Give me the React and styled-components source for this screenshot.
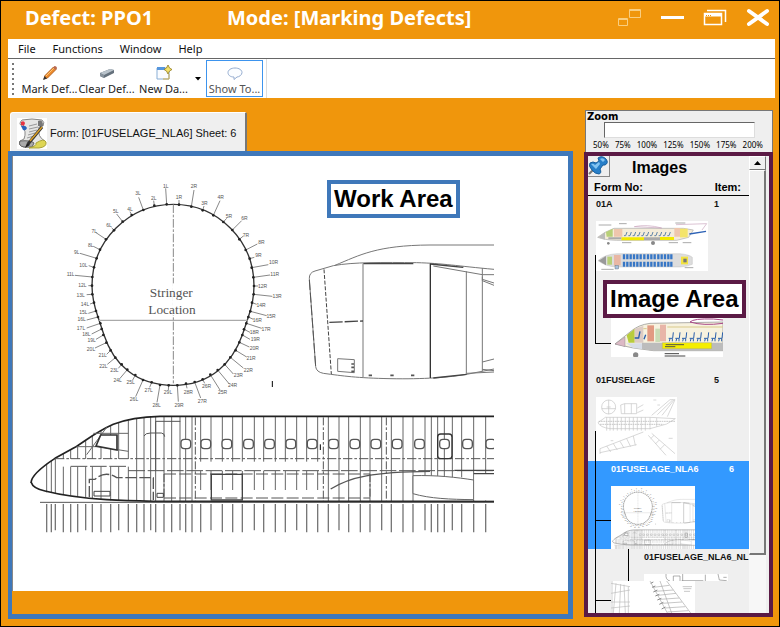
import React from "react";
import styled, { createGlobalStyle } from "styled-components";

const ORANGE = "#f0960c";
const BLUE = "#3f78ba";
const PLUM = "#5b1a45";
const PANEL = "#efefef";
const UI = '"Noto Sans", "Open Sans", sans-serif';
const ARIAL = '"Liberation Sans", Arial, sans-serif';

const GlobalStyle = createGlobalStyle`
  * { box-sizing: border-box; }
  body { margin: 0; background: ${ORANGE}; font-family: ${ARIAL}; }
  button { font: inherit; color: inherit; border: 0; padding: 0; background: none; cursor: pointer; }
  svg { display: block; flex: none; }
`;

const Window = styled.div`
  display: flex;
  flex-direction: column;
  height: 100vh;
  border: 1px solid #000;
  background: ${ORANGE};
`;

const TitleBar = styled.header`
  display: flex;
  align-items: center;
  height: 38px;
  padding: 0 9px 4px 24px;
  flex: none;
`;

const Title = styled.h1`
  margin: 0;
  width: ${(p) => p.$width || "auto"};
  font: 700 20px/30px ${UI};
  color: #fff;
  white-space: nowrap;
`;

const WindowControls = styled.div`
  display: flex;
  align-items: center;
  gap: 19px;
  margin-left: auto;
`;

const WindowButton = styled.button`
  width: 24px;
  height: 20px;
`;

const Chrome = styled.div`
  margin: 0 4px 0 7px;
  background: #fff;
  flex: none;
`;

const MenuBar = styled.nav`
  display: flex;
  gap: 17px;
  height: 20px;
  padding-left: 10px;
  border-bottom: 1px solid #666;
  font: 11px/18px ${UI};
  color: #111;
`;

const MenuButton = styled.button``;

const ToolBar = styled.div`
  display: flex;
  align-items: center;
  height: 39px;
  width: 259px;
  padding-left: 4px;
  border-right: 1px solid #ddd;
`;

const Grip = styled.span`
  width: 2px;
  height: 32px;
  margin-right: 7px;
  background: repeating-linear-gradient(#777 0 2px, #fff 2px 5px);
`;

const ToolButton = styled.button`
  display: flex;
  flex-direction: column;
  align-items: center;
  justify-content: space-between;
  width: 57px;
  height: 37px;
  padding-top: 4px;
  border: 1px solid ${(p) => (p.$active ? "#3d94ee" : "transparent")};
  font: 11px/14px ${UI};
  color: ${(p) => (p.$active ? "#555" : "#222")};
  white-space: nowrap;
`;

const DropButton = styled.button`
  display: flex;
  align-items: center;
  justify-content: center;
  width: 12px;
  height: 37px;
  margin-right: 2px;
`;

const Body = styled.main`
  display: flex;
  flex: 1;
  min-height: 0;
  gap: 11px;
  padding: 0 6px 7px 7px;
`;

const WorkColumn = styled.section`
  display: flex;
  flex-direction: column;
  flex: 1;
  min-width: 0;
  padding-top: 14px;
`;

const FormTab = styled.button`
  display: flex;
  align-items: center;
  align-self: flex-start;
  gap: 3px;
  width: 237px;
  height: 39px;
  margin-left: 2px;
  padding: 2px 0 0 6px;
  background: ${PANEL};
  border: 1px solid #fff;
  border-right: 2px solid #777;
  border-bottom: 0;
  border-radius: 3px 2px 0 0;
  font: 11px/16px ${ARIAL};
  color: #111;
  white-space: nowrap;
`;

const WorkFrame = styled.div`
  position: relative;
  display: flex;
  flex-direction: column;
  flex: 1;
  min-height: 0;
  border: 5px solid ${BLUE};
  border-left-width: 4px;
`;

const Canvas = styled.div`
  flex: 1;
  min-height: 0;
  overflow: hidden;
  background: #fff;
  border-left: 1px solid #888;
`;

const WorkFooter = styled.div`
  height: 23px;
  flex: none;
`;

const Callout = styled.strong`
  position: absolute;
  left: ${(p) => p.$left}px;
  top: ${(p) => p.$top}px;
  padding: 0 3px;
  border: 4px solid ${(p) => p.$color};
  background: #fff;
  font: 700 24px/30px ${ARIAL};
  color: #000;
  white-space: nowrap;
`;

const SideColumn = styled.aside`
  display: flex;
  flex-direction: column;
  width: 189px;
  flex: none;
  padding: 12px 0 2px;
`;

const ZoomPanel = styled.div`
  height: 42px;
  margin-left: 1px;
  flex: none;
  background: ${PANEL};
  border: 1px solid #777;
  border-bottom: 0;
`;

const ZoomLabel = styled.label`
  display: block;
  padding-left: 1px;
  font: 700 10px/11px "DejaVu Sans", sans-serif;
  color: #000;
`;

const ZoomSlider = styled.input`
  appearance: none;
  display: block;
  width: 151px;
  height: 16px;
  margin: 0 0 0 18px;
  background: #fff;
  border: 1px solid #666;
  border-right-color: #ddd;
  border-bottom-color: #ddd;
  &::-webkit-slider-thumb { appearance: none; width: 0; height: 0; }
`;

const ZoomScale = styled.div`
  display: flex;
  justify-content: space-between;
  padding: 0 9px 0 7px;
  font: 8px/14px "Noto Sans", sans-serif;
  color: #000;
`;

const ImageFrame = styled.div`
  position: relative;
  display: flex;
  flex: 1;
  min-height: 0;
  border: 4px solid ${PLUM};
  background: ${PANEL};
`;

const ImageMain = styled.div`
  flex: 1;
  min-width: 0;
  overflow: hidden;
`;

const ImageHeader = styled.div`
  display: flex;
  height: 24px;
`;

const PinButton = styled.button`
  width: 22px;
  height: 21px;
  border: 1px solid #888;
  border-top: 0;
  border-left: 0;
`;

const ImagesTitle = styled.h2`
  margin: 0 0 0 22px;
  font: 700 16px/24px ${ARIAL};
`;

const ColumnHeads = styled.div`
  display: flex;
  justify-content: space-between;
  height: 16px;
  padding: 0 8px 0 6px;
  border-bottom: 1px solid #000;
  font: 700 11px/14px ${ARIAL};
`;

const Tree = styled.div`
  overflow: hidden;
`;

const Row = styled.div`
  position: relative;
  padding: ${(p) => p.$top || 0}px 0 ${(p) => p.$bottom || 0}px ${(p) => p.$indent}px;
  background: ${(p) => (p.$selected ? "#3399ff" : "transparent")};
  color: ${(p) => (p.$selected ? "#fff" : "#111")};
`;

const RowLabel = styled.button`
  display: flex;
  width: 100%;
  height: 17px;
  margin-bottom: 8px;
  font: 700 9px/17px ${ARIAL};
  text-align: left;
  white-space: nowrap;
`;

const RowName = styled.span`
  min-width: ${(p) => (p.$solo ? 0 : 118)}px;
`;

const Thumb = styled.div`
  width: ${(p) => p.$width}px;
  height: ${(p) => p.$height}px;
  overflow: hidden;
  background: #fff;
`;

const ThumbPair = styled.div`
  display: flex;
`;

const Branch = styled.span`
  position: absolute;
  left: ${(p) => p.$x}px;
  top: ${(p) => p.$y}px;
  width: ${(p) => p.$w || 0}px;
  height: ${(p) => p.$h}px;
  border-left: 1px solid #000;
  border-bottom: ${(p) => (p.$w ? 1 : 0)}px solid #000;
`;

const ScrollTrack = styled.div`
  display: flex;
  flex-direction: column;
  width: 17px;
  margin-right: 3px;
  background: #f7f7f7;
`;

const ScrollUp = styled.button`
  display: flex;
  align-items: center;
  justify-content: center;
  height: 14px;
  background: ${PANEL};
  border: 1px solid #fff;
  border-right-color: #777;
  border-bottom-color: #777;
`;

const ScrollThumb = styled.div`
  height: 385px;
  background: ${PANEL};
  border: 1px solid #fff;
  border-right: 2px solid #777;
  border-bottom: 2px solid #777;
`;

/* ---- technical drawings ---- */

/* tick start x, y, tick end x, y, label centre x, y */
const STRINGERS = [
  ["1L", 320, 103, 317, 55, 317, 48], ["2L", 283, 107, 281, 92, 281, 84],
  ["3L", 250, 120, 236, 82, 234, 70], ["4L", 215, 135, 210, 125, 210, 119],
  ["5L", 188, 155, 170, 132, 167, 125], ["6L", 162, 181, 155, 173, 147, 167],
  ["7L", 138, 208, 108, 188, 103, 184], ["8L", 120, 239, 100, 229, 92, 227],
  ["9L", 110, 265, 60, 250, 50, 247], ["10L", 102, 292, 86, 287, 70, 285],
  ["11L", 97, 321, 45, 316, 32, 314], ["12L", 96, 347, 85, 347, 67, 346],
  ["13L", 97, 373, 80, 374, 62, 375], ["14L", 102, 398, 90, 402, 75, 402],
  ["15L", 108, 423, 85, 430, 70, 428], ["16L", 114, 441, 80, 450, 65, 449],
  ["17L", 121, 460, 80, 474, 63, 476], ["18L", 125, 477, 95, 492, 79, 494],
  ["19L", 130, 495, 108, 508, 95, 510], ["20L", 139, 518, 105, 534, 93, 538],
  ["21L", 152, 541, 140, 553, 128, 556], ["22L", 166, 563, 142, 583, 130, 588],
  ["23L", 185, 583, 175, 595, 163, 600], ["24L", 202, 599, 180, 625, 173, 631],
  ["25L", 226, 615, 218, 630, 212, 637], ["26L", 249, 630, 227, 680, 222, 687],
  ["27L", 275, 637, 269, 652, 266, 661], ["28L", 300, 645, 291, 697, 290, 707],
  ["29L", 326, 646, 325, 660, 324, 668], ["1R", 357, 104, 357, 90, 357, 82],
  ["2R", 394, 110, 402, 60, 402, 50], ["3R", 428, 121, 432, 108, 433, 100],
  ["4R", 460, 136, 480, 92, 482, 82], ["5R", 490, 156, 500, 145, 507, 139],
  ["6R", 517, 180, 545, 152, 553, 146], ["7R", 538, 208, 550, 198, 558, 196],
  ["8R", 557, 240, 592, 222, 604, 217], ["9R", 569, 266, 583, 262, 595, 257],
  ["10R", 575, 293, 625, 284, 641, 278], ["11R", 580, 322, 630, 315, 644, 313],
  ["12R", 582, 348, 595, 348, 608, 348], ["13R", 581, 373, 637, 379, 651, 380],
  ["14R", 576, 398, 590, 403, 603, 405], ["15R", 571, 424, 620, 437, 633, 438],
  ["16R", 565, 441, 580, 448, 592, 450], ["17R", 559, 460, 605, 475, 618, 478],
  ["18R", 552, 478, 570, 487, 583, 488], ["19R", 547, 495, 570, 508, 586, 509],
  ["20R", 538, 517, 568, 531, 583, 535], ["21R", 527, 541, 560, 561, 573, 565],
  ["22R", 511, 562, 550, 594, 565, 600], ["23R", 494, 583, 520, 612, 535, 617],
  ["24R", 473, 600, 508, 642, 518, 647], ["25R", 451, 614, 480, 660, 488, 667],
  ["26R", 428, 628, 434, 640, 440, 648], ["27R", 404, 636, 422, 684, 427, 694],
  ["28R", 378, 641, 381, 655, 385, 666], ["29R", 352, 646, 355, 695, 357, 706],
];

const FRAMES = [
  80, 94, 106, 130, 152, 173, 197, 217, 243, 272, 296, 325, 350, 372, 392, 407, 432, 455, 480,
  497, 516, 542, 573, 607, 638, 667, 703, 731, 766, 796, 830, 860, 893, 925, 957, 986, 1021, 1050,
  1085, 1114, 1149, 1179, 1215, 1234, 1253, 1273, 1297, 1325, 1361, 1397,
];
const CABIN_WINDOWS = [497, 557, 620, 685, 748, 812, 876, 940, 1004, 1067, 1131, 1198, 1273, 1342, 1412];
const NOSE = [[33, 270], [60, 235], [105, 205], [165, 172], [230, 128], [280, 103], [325, 91], [380, 82], [420, 79]];

function noseTop(x) {
  for (let i = 1; i < NOSE.length; i++) {
    const [x0, y0] = NOSE[i - 1];
    const [x1, y1] = NOSE[i];
    if (x <= x1) return y0 + ((y1 - y0) * (x - x0)) / (x1 - x0);
  }
  return 79;
}

function frameLine(x) {
  const top = noseTop(x);
  const belly = Math.min(333, 297 + x / 8);
  if (x < 120) return `M${x} ${top}V${belly}`;
  if (x < 330) return `M${x} ${top}V207M${x} 230V${belly}`;
  if (x < 530) return `M${x} ${top}V333`;
  if (x < 920) return `M${x} 79V215M${x} 243V300`;
  if (x > 1179 && x < 1361) return `M${x} 79V262`;
  return `M${x} 79V333`;
}

function CrossSection() {
  return (
    <svg x="60" y="170" width="230" height="240" viewBox="0 0 690 720" fill="none">
      <path d="M340 103C475 103 582 213 582 347C582 385 575 412 565 441L547 495C518 575 455 646 340 646C225 646 160 580 132 495L114 441C104 412 96 385 96 347C96 213 205 103 340 103Z" stroke="#333" strokeWidth="4" />
      <path d="M340 103V640" stroke="#888" strokeWidth="3" strokeDasharray="26 5 8 5" />
      <path d="M116 451H563" stroke="#aaa" strokeWidth="4" />
      {STRINGERS.map(([name, x1, y1, x2, y2]) => (
        <path key={name} d={`M${x1} ${y1}L${x2} ${y2}`} stroke="#888" strokeWidth="3" />
      ))}
      {STRINGERS.map(([name, x, y]) => (
        <circle key={name} cx={x} cy={y} r="4" fill="#222" />
      ))}
      <g fill="#555" fontFamily="Liberation Sans, sans-serif" fontSize="15" textAnchor="middle">
        {STRINGERS.map(([name, , , , , x, y]) => (
          <text key={name} x={x} y={y + 5}>{name}</text>
        ))}
      </g>
      <path d="M340 340V436" stroke="#fff" strokeWidth="6" />
      <g fill="#555" fontFamily="Liberation Serif, serif" fontSize="40" textAnchor="middle">
        <text x="334" y="380">Stringer</text>
        <text x="336" y="431">Location</text>
      </g>
      <path d="M637 633V651" stroke="#000" strokeWidth="3" />
    </svg>
  );
}

function Cowling() {
  return (
    <svg x="290" y="170" width="204" height="220" viewBox="0 0 612 660" fill="none" stroke="#777" strokeWidth="3">
      <path d="M135 286C210 255 260 226 420 225H612" />
      <path d="M612 298C500 288 460 280 380 278C280 277 190 276 130 287L75 303Q57 308 58 326L77 590Q79 606 100 610C160 618 200 624 300 626C400 628 480 622 530 613L612 597" />
      <path d="M220 281H370M420 282L520 292M430 624L530 613" stroke="#444" strokeWidth="4" />
      <path d="M58 330L77 590" stroke="#555" strokeDasharray="30 8" />
      <path d="M102 298L124 612" stroke="#444" strokeDasharray="12 5" strokeWidth="3" />
      <path d="M219 281V622M529 304V612M577 294V604" />
      <path d="M421 281V624" stroke="#333" strokeWidth="4" />
      <path d="M118 457L219 453" stroke="#444" strokeDasharray="40 6" strokeWidth="4" />
      <path d="M143 566L193 569V608L143 604Z" />
      <path d="M184 582H192M184 592H192M184 604H192M236 616H246M301 616H311M363 616H373" stroke="#555" strokeWidth="5" />
      <path d="M430 288L577 314L612 314M577 320V332L612 346M577 328L612 339M577 576L612 567M577 598L612 602M530 610L612 606" />
    </svg>
  );
}

function Fuselage() {
  return (
    <svg x="20" y="390" width="474" height="145" viewBox="0 0 1422 435" fill="none" stroke="#666" strokeWidth="3">
      <path d={FRAMES.map(frameLine).join("")} />
      <path d={FRAMES.map((x, i) => `M${x} 342V${i % 4 === 2 ? 421 : 427}`).join("")} stroke="#777" strokeWidth="4" />
      <path d="M33 278C34 255 70 228 105 205L165 172C200 150 230 125 280 103C320 87 360 80 420 79H1422" stroke="#222" strokeWidth="5" />
      <path d="M33 276C38 292 55 299 75 303C130 317 200 325 260 329C310 332 350 333 400 334H1422" stroke="#222" strokeWidth="5" />
      <path d="M60 337H1422" stroke="#555" />
      <path d="M200 194L260 112M220 130H325M170 170H235L325 184" />
      <path d="M242 135H291V180L228 168Z" fill="#fff" stroke="#333" strokeWidth="5" />
      <path d="M105 206H1422" strokeDasharray="28 6 8 6" stroke="#555" />
      <path d="M152 229H325M325 242H1422" stroke="#555" strokeDasharray="50 8" />
      <path d="M432 252H1050M432 324H1050" stroke="#555" strokeDasharray="36 10" />
      <path d="M526 82V333M910 82V333M1099 82V333M1050 252V324M432 252V324" stroke="#555" strokeDasharray="24 6 8 6" strokeWidth="3" />
      <path d="M208 322V268H225Q255 240 290 263H400V330" stroke="#555" strokeDasharray="34 8" strokeWidth="4" />
      <path d="M222 304H270V318H222ZM411 310H430V322H411Z" stroke="#444" />
      <path d="M407 240V94H481M372 138Q376 129 392 129H424Q434 130 434 140" stroke="#555" />
      <path d="M574 330V253H667V330Z" stroke="#444" strokeWidth="4" />
      <path d="M932 297C990 260 1060 246 1230 244" stroke="#555" strokeWidth="4" />
      <path d="M1179 257C1250 255 1310 262 1361 270V329C1290 328 1230 326 1179 311Z" fill="#fff" stroke="#666" />
      <path d="M1363 250H1422V331H1363Z" fill="#fff" stroke="none" />
      <path d="M1361 251H1422M1303 241H1422" stroke="#444" strokeWidth="4" />
      {CABIN_WINDOWS.map((x) => (
        <rect key={x} x={x - 14} y="148" width="29" height="28" rx="10" fill="#fff" stroke="#555" strokeWidth="4" />
      ))}
      <rect x="1253" y="132" width="43" height="74" rx="9" stroke="#333" strokeWidth="4" />
      <path d="M901 163V180" stroke="#000" />
    </svg>
  );
}

function SheetDrawing({ width, height }) {
  return (
    <svg width={width} height={height} viewBox="22 170 472 354" role="img" aria-label="Fuselage sheet">
      <CrossSection />
      <Cowling />
      <Fuselage />
    </svg>
  );
}

const SEATS_WIDE = [134, 147, 160, 173, 186, 199, 212, 225, 238, 251, 264];
const SEATS_CLOSE = [270, 290, 310, 333, 354, 376, 398, 418];
const SEAT_COLUMNS = [132, 142, 152, 162, 172, 182, 193, 204, 214, 224, 235, 245, 255, 265, 274];

function CabinPlan() {
  return (
    <svg width="112" height="50" viewBox="48 213 336 150" fill="none">
      <path d="M53 262Q72 246 102 235H310L340 240L326 262L290 271H110Q74 270 53 262Z" fill="#f4ecd9" stroke="#aaa" strokeWidth="2" />
      <path d="M55 262L75 247V269Z" fill="#bbb" />
      <path d="M78 246L98 236V260H80Z" fill="#b8d078" />
      <path d="M102 237H127V260H102ZM283 234H300V260H283Z" fill="#efc6ad" />
      <path d="M300 236H323V262H300Z" fill="#f4e46a" />
      <path d="M124 262H192V271H124ZM240 261H282V270H240Z" fill="#f2e900" />
      <path d="M192 262H240V270H192ZM85 262H124V268H85Z" fill="#aaa" />
      {SEATS_WIDE.map((x) => <path key={x} d={`M${x + 7} 246L${x + 3} 257H${x - 2}`} stroke="#5f83a9" strokeWidth="3" />)}
      <path d="M328 252L378 244" stroke="#2d62b5" strokeWidth="4" />
      <path d="M288 224L380 221L366 240M163 230Q200 222 245 234Z" stroke="#c9a4bc" strokeWidth="2" />
      <path d="M117 221H140M56 225H94M286 219H316M126 278H154M266 278H294M308 278H334M314 353H340M64 358H101" stroke="#aaa" strokeWidth="3" />
      <circle cx="85" cy="280" r="4" fill="#888" /><circle cx="219" cy="279" r="6" fill="#888" />
      <path d="M54 332Q74 313 110 311H300Q328 314 337 322V343Q322 350 300 351H110Q78 350 54 332Z" fill="#ddd" stroke="#aaa" />
      <path d="M56 332L78 318V346Z" fill="#999" />
      <path d="M82 320H96V344H82Z" fill="#b8d078" /><path d="M102 315H122V346H102Z" fill="#e9b7a4" />
      {SEAT_COLUMNS.map((x) => <path key={x} d={`M${x} 313V328M${x} 335V350`} stroke="#3676c6" strokeWidth="7" />)}
      <path d="M303 320H324V343H303Z" fill="#f3e33f" /><path d="M310 326H320V337H310Z" fill="#777" />
      <rect x="105" y="346" width="11" height="11" fill="#a6c0df" stroke="#555" />
    </svg>
  );
}

function CabinCloseUp() {
  return (
    <svg width="112" height="50" viewBox="93 95 336 150" fill="none">
      <path d="M105 206L150 170Q175 148 210 144L429 140V226H220L160 218Z" fill="#f7f2df" stroke="#888" strokeWidth="2" />
      <path d="M105 206L135 185V214Z" fill="#dcb9c5" stroke="#777" />
      <path d="M140 180L164 160V202H146Z" fill="#b8cc3d" /><path d="M164 160L190 152V202H164Z" fill="#dccbc4" />
      <path d="M202 150H222V198H202Z" fill="#e29a82" /><path d="M226 160H240V200H226Z" fill="#cadbb5" />
      <path d="M240 148H258V198H240Z" fill="#e8b5a8" />
      <path d="M138 204H186V221L160 218Z" fill="#d7dde8" /><path d="M186 202H429V226H220L186 221Z" fill="#bcbcbc" />
      <path d="M247 202H395V220H247Z" fill="#f5ee00" stroke="#998" />
      <path d="M257 208H312M255 214H286" stroke="#554" strokeWidth="3" />
      <path d="M262 155H429M190 160H200" stroke="#d9c98a" strokeWidth="3" />
      {SEATS_CLOSE.map((x) => <path key={x} d={`M${x + 10} 171L${x + 8} 189H${x - 4}M${x} 190L${x - 2} 198M${x + 7} 190V198`} stroke="#285eab" strokeWidth="3" />)}
      <path d="M180 168L176 188H164M197 178L192 192" stroke="#285eab" strokeWidth="4" />
      <path d="M330 140Q340 129 400 131L429 134M330 140Q370 152 429 144" stroke="#a94889" strokeWidth="3" />
      <circle cx="167" cy="239" r="8" fill="#888" />
      <path d="M254 235H297M254 242H316" stroke="#444" strokeWidth="3" />
    </svg>
  );
}

function FuselageOverview() {
  return (
    <svg width="81" height="64" viewBox="48 365 243 192" fill="none" stroke="#c4c4c4" strokeWidth="2">
      <circle cx="86" cy="395" r="21" /><path d="M86 374V416M65 400H107M80 395H92" />
      <path d="M122 389L134 385H170V415H124ZM134 385V415M154 385V415M172 398L190 388M172 412L190 404" />
      <path d="M215 420L270 373H285L262 424M232 418L278 374M246 420L282 374M220 374H229M232 389H240" />
      <path d="M54 442L76 426H210L286 430L260 446L210 460H90Q60 456 54 442Z" />
      <path d="M56 438H285M60 447H250" strokeDasharray="5 2" stroke="#aaa" />
      <path d="M80 426V466M90 426V466M100 426V466M112 426V466M124 426V466M136 426V466M148 426V466M160 426V466M172 426V466M184 426V466M196 426V466M210 426V462M230 428V454" />
      <path d="M60 520L190 470M60 532L170 508M60 520V536M80 512L92 530M100 505L112 524M120 498L132 518M140 490L152 514M160 482L166 510M92 496H100" />
      <path d="M215 474L285 535M205 480L258 540M222 480L212 490M238 494L226 506M254 508L240 522M266 489H278" />
    </svg>
  );
}

function DetailStrip() {
  return (
    <svg width="84" height="7" viewBox="192 368 252 21" fill="none" stroke="#888" strokeWidth="2">
      <path d="M258 368Q256 386 270 389M280 374H300V389M280 374V389M308 368V389M376 370V389M414 368L418 386L440 388M430 378H440M305 388H370" />
    </svg>
  );
}

function PanelDetail() {
  return (
    <svg width="19" height="32" viewBox="93 393 57 96" fill="none" stroke="#bbb" strokeWidth="2">
      <path d="M93 400L150 410M93 456H150M96 393V489M108 400L100 489M122 402L118 489M132 404L136 489M93 430L150 420M93 474L150 468M145 410V489" />
    </svg>
  );
}

function WingDetail() {
  return (
    <svg width="65" height="32" viewBox="150 393 195 96" fill="none" stroke="#aaa" strokeWidth="2">
      <path d="M210 393L262 489M240 393L275 489M260 393L332 489M220 412L268 406M226 424L280 420M234 436L288 430M240 448L298 444M247 460L306 456M254 474L316 470M262 486L325 482M308 410H336M310 416H334M312 424H330" />
      <path d="M212 400L220 396M216 412L226 408M220 426L232 420M226 438L238 433M232 450L244 445M238 463L250 457M245 477L256 471" stroke="#888" strokeWidth="3" />
    </svg>
  );
}

/* ---- icons ---- */

const PencilIcon = () => (
  <svg width="16" height="16" viewBox="0 0 16 16">
    <path d="M2 14L3 10.500L11.500 2L14 4.500L5.500 13Z" fill="#ed8b2c" stroke="#a5500f" strokeWidth=".8" />
    <path d="M4 11L12 3" stroke="#ffc778" /><path d="M11 2.500L12.500 1Q15 1 15 3.500L13.500 5Z" fill="#b96a50" />
    <path d="M1 15L2.500 11L5 13.500Z" fill="#333" />
  </svg>
);

const EraserIcon = () => (
  <svg width="16" height="16" viewBox="0 0 16 16">
    <path d="M1 8L11 4L15 5V8L5 13L1 11Z" fill="#65717c" /><path d="M1 8L11 4L15 5L5 10Z" fill="#b9c3cb" />
    <path d="M5 10V13L1 11V8Z" fill="#87929c" />
  </svg>
);

const NewDateIcon = () => (
  <svg width="16" height="16" viewBox="0 0 16 16">
    <path d="M1 3H13V14H1Z" fill="#fafcff" stroke="#89aed5" /><path d="M1 2H9V5H1Z" fill="#5797dd" />
    <path d="M12 0L13.500 3L16 4.500L13.500 6L12 9L10.500 6L8 4.500L10.500 3Z" fill="#f5e36b" stroke="#927b1d" strokeWidth=".8" />
    <path d="M13 9V14H7" stroke="#d0ae4a" fill="none" />
  </svg>
);

const BalloonIcon = () => (
  <svg width="16" height="16" viewBox="0 0 16 16">
    <path d="M8 3C12 3 15 5 15 7.500C15 10 12 12 10 12L7 14.500V12C3 12 1 10 1 7.500C1 5 4 3 8 3Z" fill="#fbfdff" stroke="#94acd0" />
  </svg>
);

const ScrollIcon = () => (
  <svg width="30" height="31" viewBox="0 0 30 31">
    <path d="M0 0H30V31H0Z" fill="#fff" />
    <path d="M5 2Q15 0 25 2Q28 4 26 8L22 9Q20 19 28 23Q29 28 24 29L7 29Q1 28 3 23L7 21Q10 13 5 8Q1 6 5 2Z" fill="#e6e6e4" stroke="#888" />
    <path d="M21 3Q26 1 26 8L21 8Z" fill="#777" /><path d="M3 23Q14 22 17 25L15 29H7Q1 28 3 23Z" fill="#aaa" stroke="#666" />
    <path d="M12 8L20 6M12 11L21 9M12 14L20 12M11 17L18 15M10 20L17 18" stroke="#999" />
    <path d="M19 25Q27 20 29 24Q30 29 22 30L12 30Q20 28 19 25Z" fill="#ded654" stroke="#aaa33a" />
    <path d="M4 4Q7 2 8 5L7 8L4 7Z" fill="#e73442" /><path d="M4 8Q9 7 10 10Q9 13 6 12Z" fill="#2964bb" />
    <path d="M25 9L11 26" stroke="#333" strokeWidth="3" /><path d="M25 9L13 23" stroke="#d99e25" strokeWidth="1.500" />
    <path d="M8 30L10 25L13 27Z" fill="#222" />
  </svg>
);

const PinIcon = () => (
  <svg width="21" height="20" viewBox="0 0 21 20">
    <path d="M7 12L1 18" stroke="#777" strokeWidth="2" />
    <path d="M10 2Q14 -1 18 3Q21 7 17 9L15 9L12 13Q14 17 11 18Q7 18 4 14Q0 10 2 7Q5 5 8 7L11 5Z" fill="#287fc8" stroke="#175e9d" />
    <path d="M12 3Q15 1 17 4L15 6ZM3 8Q5 7 7 9L11 6L12 8L8 13Z" fill="#84c4f2" />
  </svg>
);

const Caret = ({ up }) => (
  <svg width="7" height="4" viewBox="0 0 7 4"><path d={up ? "M0 4L3.500 0L7 4Z" : "M0 0H6L3 3.500Z"} fill="#000" /></svg>
);

function WindowIcons() {
  return (
    <WindowControls>
      <WindowButton aria-label="Link windows">
        <svg width="24" height="20" viewBox="0 0 24 20" fill="none" stroke="#f9ce80">
          <path d="M12.500 1.500H23.500V9.500H12.500ZM1.500 10.500H10.500V17.500H1.500ZM12 2.500H24M1 11.500H11" />
        </svg>
      </WindowButton>
      <WindowButton aria-label="Minimize">
        <svg width="24" height="20" viewBox="0 0 24 20"><path d="M1 8H24V11H1Z" fill="#fff" /></svg>
      </WindowButton>
      <WindowButton aria-label="Restore">
        <svg width="24" height="20" viewBox="0 0 24 20" fill="none" stroke="#fff">
          <path d="M4 2.500H22.500V14" strokeWidth="1.500" />
          <path d="M1.500 5.500H18.500V16.500H1.500Z" strokeWidth="1.500" /><path d="M1 7H19" strokeWidth="3" /><path d="M3 7.500H9" stroke={ORANGE} strokeDasharray="1 1" />
        </svg>
      </WindowButton>
      <WindowButton aria-label="Close">
        <svg width="24" height="20" viewBox="0 0 24 20"><path d="M3 3L21 16M21 3L3 16" stroke="#fff" strokeWidth="4" strokeLinecap="round" /></svg>
      </WindowButton>
    </WindowControls>
  );
}

const ZOOM_STEPS = ["50%", "75%", "100%", "125%", "150%", "175%", "200%"];

export default function App() {
  return (
    <Window>
      <GlobalStyle />
      <TitleBar>
        <Title $width="202px">Defect: PPO1</Title>
        <Title as="h2">Mode: [Marking Defects]</Title>
        <WindowIcons />
      </TitleBar>
      <Chrome>
        <MenuBar>
          {["File", "Functions", "Window", "Help"].map((m) => <MenuButton key={m}>{m}</MenuButton>)}
        </MenuBar>
        <ToolBar>
          <Grip />
          <ToolButton><PencilIcon />Mark Def...</ToolButton>
          <ToolButton><EraserIcon />Clear Def...</ToolButton>
          <ToolButton><NewDateIcon />New Da...</ToolButton>
          <DropButton aria-label="More dates"><Caret /></DropButton>
          <ToolButton $active><BalloonIcon />Show To...</ToolButton>
        </ToolBar>
      </Chrome>
      <Body>
        <WorkColumn>
          <FormTab><ScrollIcon />Form: [01FUSELAGE_NLA6] Sheet: 6</FormTab>
          <WorkFrame>
            <Canvas>
              <svg width="484" height="434" viewBox="13 156 484 434" role="img" aria-label="Stringer location and fuselage">
                <CrossSection />
                <Cowling />
                <Fuselage />
              </svg>
            </Canvas>
            <WorkFooter />
            <Callout $left={315} $top={24} $color={BLUE}>Work Area</Callout>
          </WorkFrame>
        </WorkColumn>
        <SideColumn>
          <ZoomPanel>
            <ZoomLabel htmlFor="zoom">Zoom</ZoomLabel>
            <ZoomSlider id="zoom" type="range" min="50" max="200" step="25" defaultValue="100" />
            <ZoomScale>{ZOOM_STEPS.map((z) => <span key={z}>{z}</span>)}</ZoomScale>
          </ZoomPanel>
          <ImageFrame>
            <ImageMain>
              <ImageHeader>
                <PinButton aria-label="Pin"><PinIcon /></PinButton>
                <ImagesTitle>Images</ImagesTitle>
              </ImageHeader>
              <ColumnHeads><span>Form No:</span><span>Item:</span></ColumnHeads>
              <Tree>
                <Row $indent={8}>
                  <RowLabel><RowName>01A</RowName>1</RowLabel>
                  <Thumb $width={112} $height={50}><CabinPlan /></Thumb>
                  <Branch $x={7} $y={59} $h={16} />
                </Row>
                <Row $indent={23} $top={36} $bottom={15}>
                  <Thumb $width={112} $height={50}><CabinCloseUp /></Thumb>
                  <Branch $x={7} $y={0} $h={73} $w={16} />
                </Row>
                <Row $indent={8}>
                  <RowLabel><RowName>01FUSELAGE</RowName>5</RowLabel>
                  <Thumb $width={81} $height={64}><FuselageOverview /></Thumb>
                  <Branch $x={7} $y={59} $h={30} />
                </Row>
                <Row $indent={23} $selected>
                  <RowLabel><RowName>01FUSELAGE_NLA6</RowName>6</RowLabel>
                  <Thumb $width={84} $height={63}><SheetDrawing width={84} height={63} /></Thumb>
                  <Branch $x={7} $y={0} $h={60} $w={16} />
                  <Branch $x={7} $y={60} $h={28} />
                </Row>
                <Row $indent={56}>
                  <RowLabel><RowName $solo>01FUSELAGE_NLA6_NL</RowName></RowLabel>
                  <Thumb $width={84} $height={7}><DetailStrip /></Thumb>
                  <Branch $x={7} $y={0} $h={32} />
                  <Branch $x={40} $y={0} $h={32} />
                </Row>
                <Row $indent={23}>
                  <ThumbPair>
                    <Thumb $width={19} $height={32}><PanelDetail /></Thumb>
                    <Thumb $width={65} $height={32}><WingDetail /></Thumb>
                  </ThumbPair>
                  <Branch $x={7} $y={0} $h={20} $w={16} />
                  <Branch $x={7} $y={20} $h={13} />
                </Row>
              </Tree>
            </ImageMain>
            <ScrollTrack>
              <ScrollUp aria-label="Scroll up"><Caret up /></ScrollUp>
              <ScrollThumb />
            </ScrollTrack>
            <Callout $left={15} $top={124} $color={PLUM}>Image Area</Callout>
          </ImageFrame>
        </SideColumn>
      </Body>
    </Window>
  );
}
